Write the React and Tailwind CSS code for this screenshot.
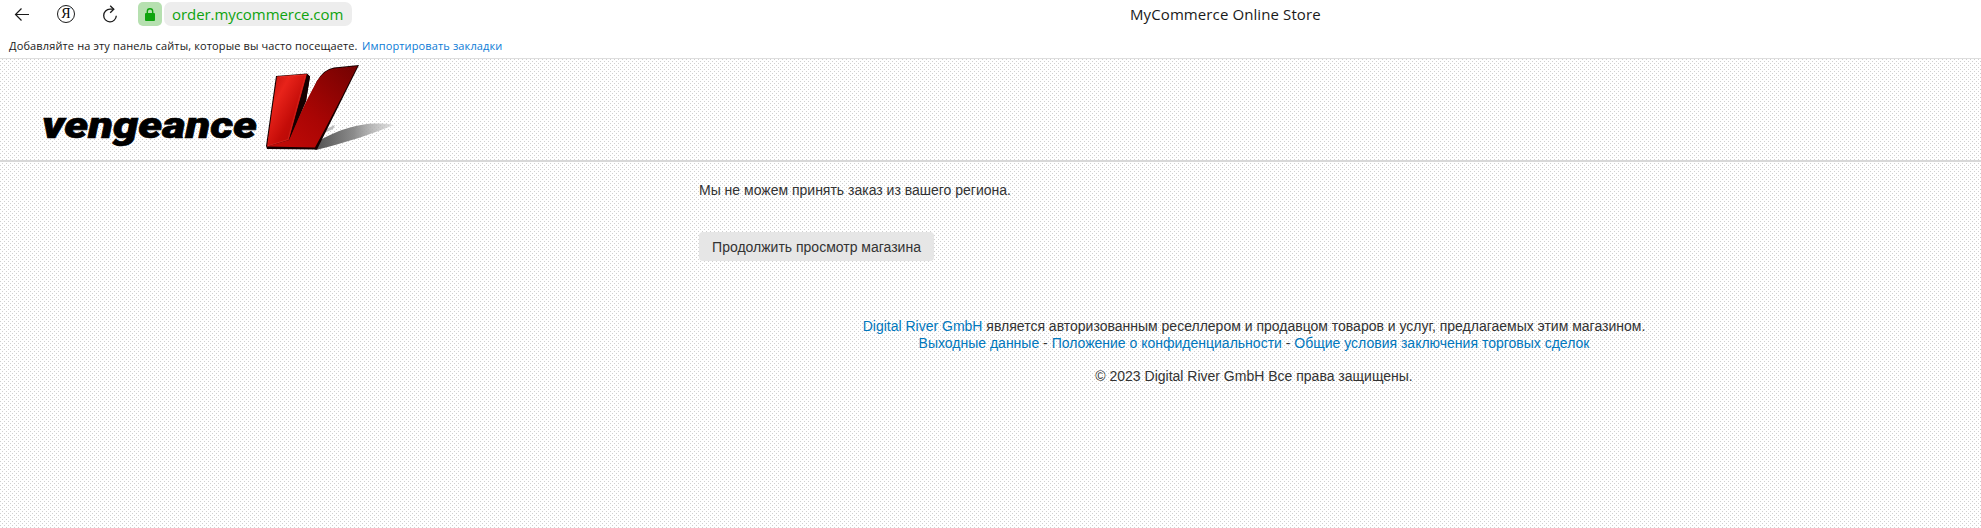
function BackIcon() {
  return (
    <svg className="w-4 h-4" viewBox="0 0 16 16" fill="none" stroke="#1a1a1a" strokeWidth="1.2">
      <path d="M15 8.5H1.5M7.5 2.5l-6 6 6 6" />
    </svg>
  );
}

function ReloadIcon() {
  return (
    <svg className="w-4 h-[18px]" viewBox="0 0 16 18" fill="none" stroke="#1a1a1a" strokeWidth="1.3">
      <path d="M11.5 4.2H8a6.3 6.3 0 1 0 6.3 6.6" />
      <path d="M8.2 0.7l3.6 3.5-3.6 3.5" />
    </svg>
  );
}

function LockIcon() {
  return (
    <svg className="w-[10px] h-[13px]" viewBox="0 0 10 13">
      <path d="M2.3 6V3.4a2.7 2.7 0 0 1 5.4 0V6" fill="none" stroke="#0fa30f" strokeWidth="1.4" />
      <rect x="0" y="5" width="10" height="8" rx="1" fill="#0fa30f" />
    </svg>
  );
}

function BrowserBar() {
  return (
    <div className="flex items-center h-[28px]">
      <div className="w-[57px] pl-[14px] shrink-0">
        <BackIcon />
      </div>
      <div className="w-[18px] h-[18px] mr-[27px] shrink-0 border border-[#1a1a1a] rounded-full flex items-center justify-center font-['Liberation_Serif',serif] text-[14px] leading-none text-black">
        Я
      </div>
      <div className="w-9 shrink-0">
        <ReloadIcon />
      </div>
      <div className="w-6 h-6 rounded-[5px] bg-[#b6e0b0] flex items-center justify-center shrink-0">
        <LockIcon />
      </div>
      <div className="ml-[2px] h-6 w-[188px] shrink-0 rounded-[7px] bg-[#ededed] pl-2 flex items-center text-[15px] tracking-[-0.06px] text-[#0fa30f] whitespace-nowrap">
        order.mycommerce.com
      </div>
      <div className="ml-[778px] text-[15px] tracking-[0.1px] text-[#1a1a1a] whitespace-nowrap">
        MyCommerce Online Store
      </div>
    </div>
  );
}

function BookmarksBar() {
  return (
    <div className="flex h-[30px] pl-[9px] pt-[10px] text-[11px] tracking-[0.13px] leading-[16px] whitespace-nowrap">
      <span className="w-[353px] shrink-0 text-[#1a1a1a]">
        Добавляйте на эту панель сайты, которые вы часто посещаете.
      </span>
      <a className="text-[#0a7bd6]">Импортировать закладки</a>
    </div>
  );
}

function Logo() {
  return (
    <svg className="w-[360px] h-[92px]" viewBox="40 62 360 92">
      <defs>
        <linearGradient id="stem" x1="0" y1="0" x2="1" y2="1">
          <stop offset="0" stopColor="#b90c08" />
          <stop offset="0.3" stopColor="#e8231a" />
          <stop offset="0.6" stopColor="#c40c08" />
          <stop offset="1" stopColor="#a80604" />
        </linearGradient>
        <linearGradient id="arm" x1="0" y1="1" x2="1" y2="0">
          <stop offset="0" stopColor="#c40b08" />
          <stop offset="0.45" stopColor="#a90504" />
          <stop offset="1" stopColor="#720202" />
        </linearGradient>
        <linearGradient id="shadow" x1="0" y1="0" x2="1" y2="0">
          <stop offset="0" stopColor="#505050" />
          <stop offset="0.5" stopColor="#8c8c8c" />
          <stop offset="1" stopColor="#c4c4c4" stopOpacity="0.5" />
        </linearGradient>
      </defs>
      <text
        x="42"
        y="138.3"
        textLength="215"
        lengthAdjust="spacingAndGlyphs"
        fill="#000"
        stroke="#000"
        strokeWidth="0.7"
        className="font-['Roboto',sans-serif] text-[37px] font-black italic"
      >
        vengeance
      </text>
      <path d="M314 149L322 139Q350 124 375 123.5Q390 123 394 125C375 133 345 143 316 150Z" fill="url(#shadow)" />
      <path d="M321 131l14-6-2 4-13 6z" fill="#bdbdbd" />
      {/* black extrusion around the V */}
      <path d="M276 76L307 73.5l3 3-4 24.500-14 33L317 81Q324 69 334 67.500L359 65 317 149.500 267 149l-1-3z" fill="#160000" />
      <path d="M277 76.5L307 74l-1 5-17 61-22 6.5z" fill="url(#stem)" />
      <path d="M267 146.5L289 140C297 120 307 99 317 81Q324 70 334 68.5L357.5 66C344 93 330 120 315 147.5z" fill="url(#arm)" />
      <path d="M307 74l3 2.5-4 24.5-17 39z" fill="#160000" />
      <path d="M277.5 77L305.5 75 288 139.5 267.5 146" fill="none" stroke="#e2453a" strokeOpacity="0.6" strokeWidth="0.6" />
    </svg>
  );
}

export default function App() {
  return (
    <div className="h-[528px] flex flex-col overflow-hidden bg-white font-['Open_Sans','Noto_Sans',sans-serif]">
      <BrowserBar />
      <BookmarksBar />
      <div className="flex-1 border-t border-[#dedede] bg-white bg-[image:conic-gradient(at_1px_1px,transparent_75%,#d0d0d0_0),conic-gradient(at_1px_1px,transparent_75%,#d0d0d0_0)] bg-size-[4px_4px] bg-position-[2px_0,0_2px] font-['Liberation_Sans',Arial,sans-serif] text-[14px] text-[#333]">
        <header className="h-[103px] border-b-2 border-[#d8d8d8] pl-10 pt-[3px]">
          <Logo />
        </header>
        <main className="ml-[699px] w-[1110px] pt-5">
          <p className="leading-[17px]">Мы не можем принять заказ из вашего региона.</p>
          <button className="mt-[33px] pt-[2px] block w-[235px] h-[29px] rounded-[4px] bg-[#e6e6e6] whitespace-nowrap">
            Продолжить просмотр магазина
          </button>
          <footer className="mt-[57px] text-center leading-[17px]">
            <p>
              <a className="text-[#0077bd]">Digital River GmbH</a> является авторизованным реселлером и продавцом товаров и услуг, предлагаемых этим магазином.
            </p>
            <p>
              <a className="text-[#0077bd]">Выходные данные</a> -{' '}
              <a className="text-[#0077bd]">Положение о конфиденциальности</a> -{' '}
              <a className="text-[#0077bd]">Общие условия заключения торговых сделок</a>
            </p>
            <p className="mt-4">© 2023 Digital River GmbH Все права защищены.</p>
          </footer>
        </main>
      </div>
    </div>
  );
}
